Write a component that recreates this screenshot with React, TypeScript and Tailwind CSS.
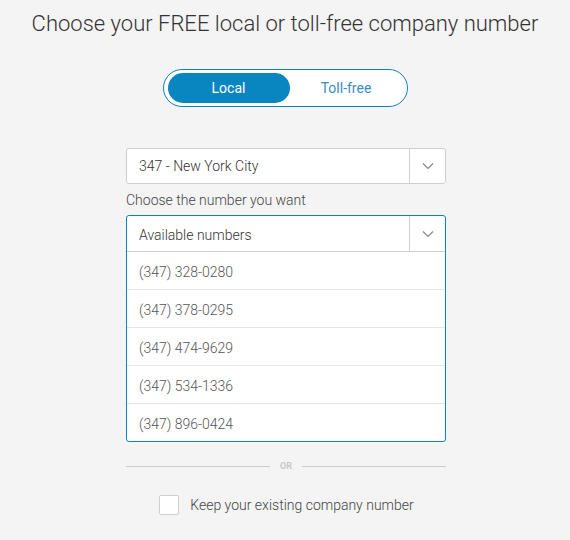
import { useState } from "react";

const numbers = [
  "(347) 328-0280",
  "(347) 378-0295",
  "(347) 474-9629",
  "(347) 534-1336",
  "(347) 896-0424",
];

function Chevron() {
  return (
    <svg width="12" height="8" viewBox="0 0 12 8" fill="none">
      <path d="M1 1.5l5 5 5-5" stroke="#888" strokeWidth="1.2" />
    </svg>
  );
}

export default function App() {
  const [mode, setMode] = useState<"local" | "tollfree">("local");
  const [keep, setKeep] = useState(false);

  return (
    <div
      className="min-h-[540px] bg-[#f4f4f4] text-[#555]"
      style={{ fontFamily: "Roboto, 'Noto Sans', sans-serif" }}
    >
      <h1 className="pt-[9px] text-center text-[22px] leading-[30px] font-light text-[#333]">
        Choose your FREE local or toll-free company number
      </h1>

      <div className="mt-[30px] flex justify-center">
        <div className="flex h-[38px] w-[245px] items-center rounded-full border border-[#0a84c1] bg-white px-[4px]">
          <button
            type="button"
            onClick={() => setMode("local")}
            className={`h-[30px] w-[122px] rounded-full text-[14px] ${
              mode === "local" ? "bg-[#0886c0] text-white" : "text-[#3a8cc4]"
            }`}
          >
            Local
          </button>
          <button
            type="button"
            onClick={() => setMode("tollfree")}
            className={`h-[30px] flex-1 rounded-full text-[14px] ${
              mode === "tollfree" ? "bg-[#0886c0] text-white" : "text-[#3a8cc4]"
            }`}
          >
            Toll-free
          </button>
        </div>
      </div>

      <div className="ml-[126px] mt-[41px] w-[320px] font-light">
        <div className="flex h-[36px] items-stretch rounded-[3px] border border-[#d0d0d0] bg-white">
          <span className="flex flex-1 items-center pl-[12px] text-[14px] text-[#333]">
            347 - New York City
          </span>
          <span className="flex w-[36px] items-center justify-center border-l border-[#d0d0d0]">
            <Chevron />
          </span>
        </div>

        <p className="mt-[7px] text-[14px] leading-[18px] text-[#444]">
          Choose the number you want
        </p>

        <div className="mt-[6px] rounded-[3px] border border-[#0a84c1] bg-white">
          <div className="flex h-[36px] items-stretch border-b border-[#d0d0d0]">
            <span className="flex flex-1 items-center pl-[12px] pt-[3px] text-[14px] text-[#333]">
              Available numbers
            </span>
            <span className="flex w-[36px] items-center justify-center border-l border-[#d0d0d0]">
              <Chevron />
            </span>
          </div>
          {numbers.map((n, i) => (
            <div
              key={n}
              className={`flex items-center pl-[12px] pt-[3px] text-[14px] text-[#555] ${
                i < numbers.length - 1 ? "h-[38px] border-b border-[#e6e6e6]" : "h-[37px]"
              }`}
            >
              {n}
            </div>
          ))}
        </div>

        <div className="mt-[18px] flex items-center gap-[10px]">
          <div className="h-px flex-1 bg-[#cccccc]" />
          <span className="text-[9px] font-bold text-[#c8c8c8]">OR</span>
          <div className="h-px flex-1 bg-[#cccccc]" />
        </div>

        <label className="mt-[21px] flex cursor-pointer items-center justify-center gap-[11px] pl-[1px]">
          <input
            type="checkbox"
            checked={keep}
            onChange={(e) => setKeep(e.target.checked)}
            className="peer sr-only"
          />
          <span className="h-[20px] w-[20px] rounded-[2px] border border-[#cfcfcf] bg-white" />
          <span className="text-[14px] text-[#444]">Keep your existing company number</span>
        </label>
      </div>
    </div>
  );
}
